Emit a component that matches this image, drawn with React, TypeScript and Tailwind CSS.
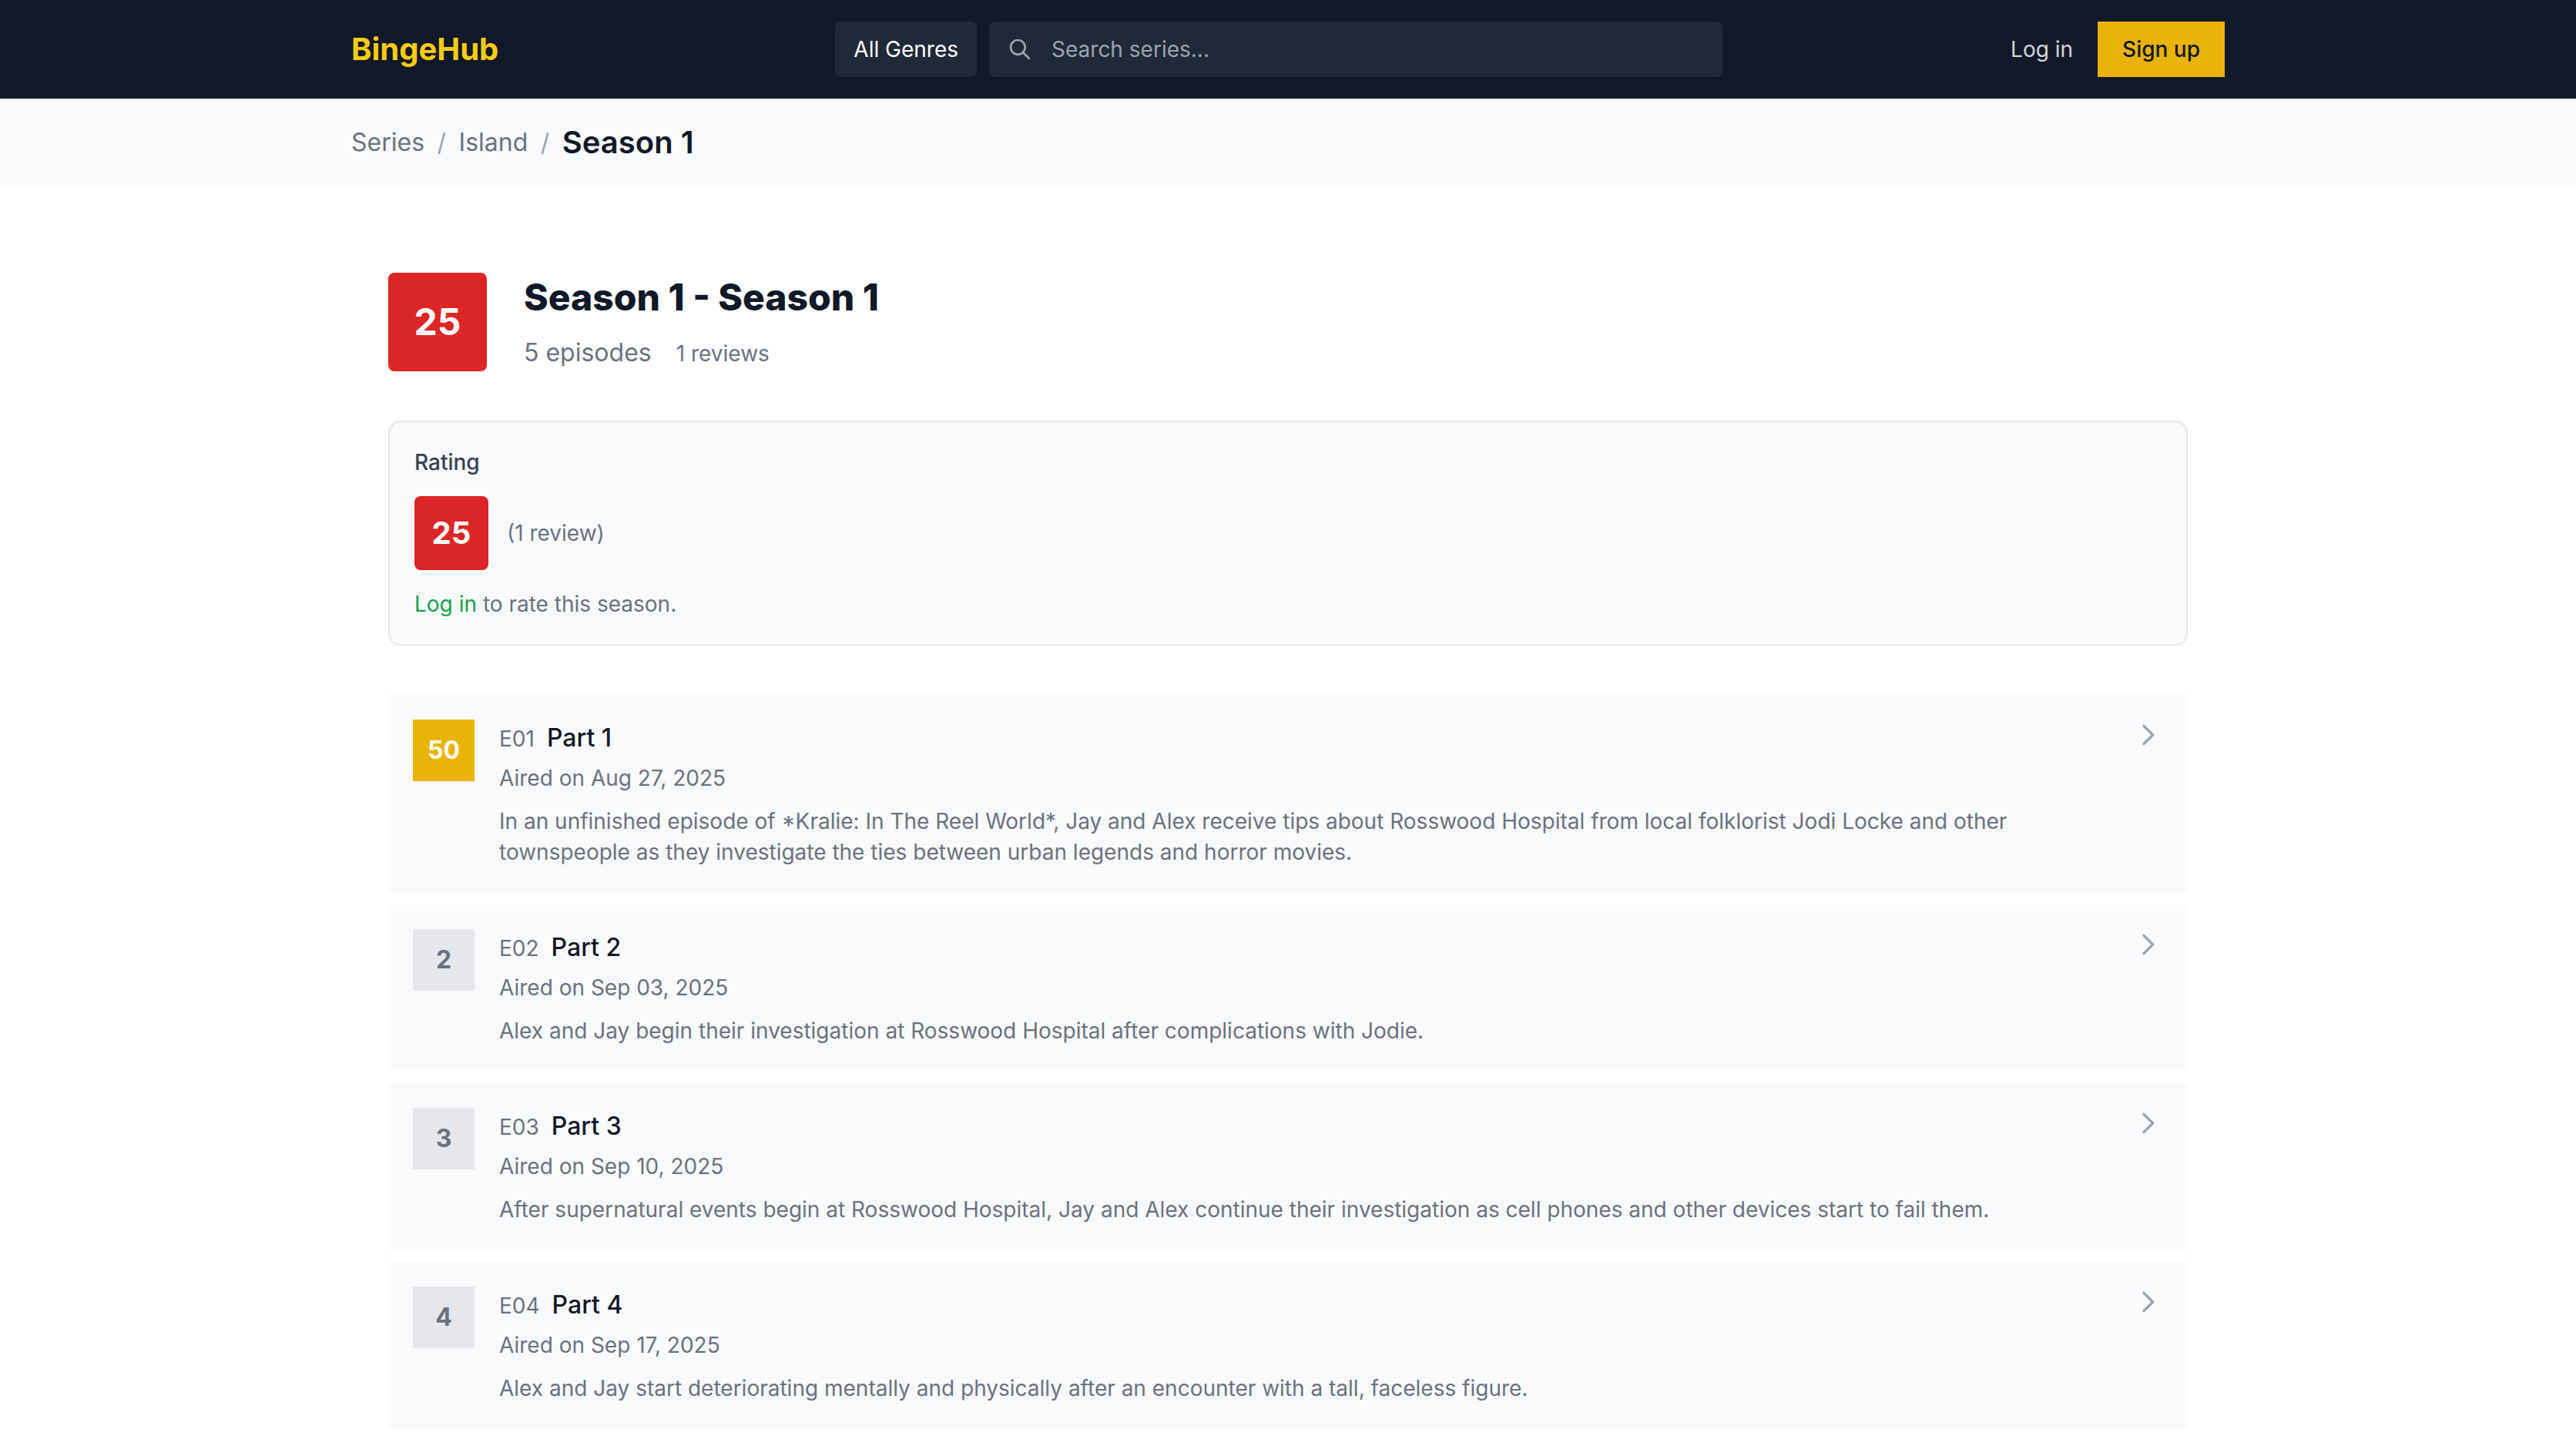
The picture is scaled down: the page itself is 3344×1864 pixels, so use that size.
import React from "react";

const font = { fontFamily: "Inter, sans-serif" };

function Chevron() {
  return (
    <svg className="h-10 w-10 shrink-0 text-[#9ca3af]" fill="none" viewBox="0 0 24 24" stroke="currentColor" strokeWidth={2}>
      <path strokeLinecap="round" strokeLinejoin="round" d="M9 5l7 7-7 7" />
    </svg>
  );
}

type Ep = { code: string; title: string; date: string; score: string; gold?: boolean; desc: React.ReactNode };

const episodes: Ep[] = [
  {
    code: "E01",
    title: "Part 1",
    date: "Aired on Aug 27, 2025",
    score: "50",
    gold: true,
    desc: (
      <>
        In an unfinished episode of <span className="[font-feature-settings:'case']">*</span>Kralie: In The Reel World*, Jay and Alex receive tips about Rosswood Hospital from local folklorist Jodi Locke and other townspeople as they investigate the ties between urban legends and horror movies.
      </>
    ),
  },
  {
    code: "E02",
    title: "Part 2",
    date: "Aired on Sep 03, 2025",
    score: "2",
    desc: "Alex and Jay begin their investigation at Rosswood Hospital after complications with Jodie.",
  },
  {
    code: "E03",
    title: "Part 3",
    date: "Aired on Sep 10, 2025",
    score: "3",
    desc: "After supernatural events begin at Rosswood Hospital, Jay and Alex continue their investigation as cell phones and other devices start to fail them.",
  },
  {
    code: "E04",
    title: "Part 4",
    date: "Aired on Sep 17, 2025",
    score: "4",
    desc: "Alex and Jay start deteriorating mentally and physically after an encounter with a tall, faceless figure.",
  },
];

function EpisodeCard({ ep }: { ep: Ep }) {
  return (
    <div className="flex items-start gap-8 bg-[#f9fafb] p-8">
      <div
        className={
          ep.gold
            ? "flex h-20 w-20 shrink-0 items-center justify-center bg-[#eab308] text-[32px] font-bold text-white"
            : "flex h-20 w-20 shrink-0 items-center justify-center bg-[#e5e7eb] text-[32px] font-bold text-[#6b7280]"
        }
      >
        {ep.score}
      </div>
      <div className="min-w-0 flex-1">
        <div className="flex items-baseline gap-4">
          <span className="text-[28px] leading-[40px] text-[#6b7280]">{ep.code}</span>
          <span className="text-[32px] leading-[48px] font-medium text-[#111827]">{ep.title}</span>
        </div>
        <p className="mt-2 text-[28px] leading-[40px] text-[#6b7280]">{ep.date}</p>
        <p className="mt-4 text-[28px] leading-[40px] text-[#6b7280]">{ep.desc}</p>
      </div>
      <Chevron />
    </div>
  );
}

export default function App() {
  return (
    <div className="min-h-screen bg-white" style={font}>
      <header className="bg-[#111827]">
        <div className="mx-auto flex h-32 max-w-[2560px] items-center px-16">
          <span className="text-[40px] font-bold text-[#facc15]">BingeHub</span>
          <div className="ml-[437px] flex w-[1152px] gap-4">
            <button className="h-[72px] rounded-lg bg-[#1f2937] px-6 text-[28px] text-white">All Genres</button>
            <div className="flex h-[72px] flex-1 items-center gap-[25px] rounded-lg bg-[#1f2937] px-6">
              <svg className="h-8 w-8 text-[#9ca3af]" fill="none" viewBox="0 0 24 24" stroke="currentColor" strokeWidth={2}>
                <path strokeLinecap="round" strokeLinejoin="round" d="M21 21l-6-6m2-5a7 7 0 11-14 0 7 7 0 0114 0z" />
              </svg>
              <span className="text-[28px] text-[#9ca3af]">Search series...</span>
            </div>
          </div>
          <div className="ml-auto flex items-center gap-8">
            <span className="text-[28px] text-[#d1d5db]">Log in</span>
            <button className="h-[72px] bg-[#eab308] px-8 text-[28px] font-medium text-[#111827]">Sign up</button>
          </div>
        </div>
      </header>

      <div className="bg-[#f9fafb]">
        <div className="mx-auto flex h-[114px] max-w-[2560px] items-center gap-[16.5px] px-16 text-[32px] text-[#6b7280]">
          <span>Series</span>
          <span className="text-[#9ca3af]">/</span>
          <span>Island</span>
          <span className="text-[#9ca3af]">/</span>
          <span className="text-[40px] font-semibold text-[#111827]">Season 1</span>
        </div>
      </div>

      <main className="mx-auto max-w-[2432px] px-12 pt-28">
        <div className="flex gap-12">
          <div className="flex h-32 w-32 items-center justify-center rounded-lg bg-[#dc2626] text-[48px] font-bold text-white">25</div>
          <div>
            <h1 className="text-[48px] leading-[64px] font-extrabold text-[#111827]">Season 1 - Season 1</h1>
            <div className="mt-4 flex items-baseline gap-8">
              <span className="text-[32px] leading-[48px] text-[#6b7280]">5 episodes</span>
              <span className="text-[28px] leading-[40px] text-[#6b7280]">1 reviews</span>
            </div>
          </div>
        </div>

        <section className="mt-16 rounded-2xl border-2 border-[#e5e7eb] bg-[#f9fafb] p-8">
          <p className="text-[28px] leading-[40px] font-medium text-[#374151]">Rating</p>
          <div className="mt-6 flex items-center gap-6">
            <div className="flex h-24 w-24 items-center justify-center rounded-lg bg-[#dc2626] text-[40px] font-bold text-white">25</div>
            <span className="text-[28px] text-[#6b7280]">(1 review)</span>
          </div>
          <p className="mt-6 text-[28px] leading-[40px] text-[#6b7280]">
            <span className="text-[#16a34a]">Log in</span> to rate this season.
          </p>
        </section>

        <div className="mt-16 flex flex-col gap-4">
          {episodes.map((ep) => (
            <EpisodeCard key={ep.code} ep={ep} />
          ))}
        </div>
      </main>
    </div>
  );
}
